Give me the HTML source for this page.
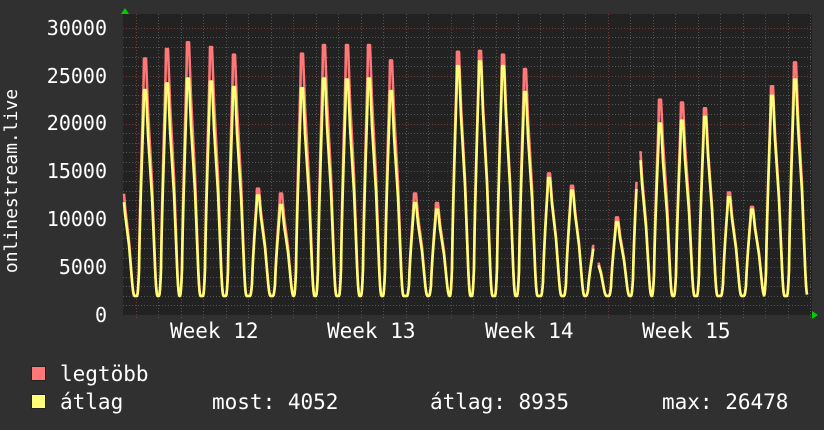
<!DOCTYPE html>
<html><head><meta charset="utf-8"><style>
html,body{margin:0;padding:0;background:#303030;}
body{width:824px;height:430px;overflow:hidden;position:relative;font-family:"DejaVu Sans Mono","Liberation Mono",monospace;color:#fff;}
.t{position:absolute;white-space:pre;line-height:1;}
.yl{font-size:20px;right:717px;}
.wk{font-size:21px;}
.lg{font-size:21px;}
.sq{position:absolute;width:13px;height:13px;border:1px solid #222;}
</style></head><body>
<svg id="g" width="824" height="430" style="position:absolute;left:0;top:0">
<rect x="123" y="14" width="689" height="301" fill="#222"/>
<g id="grid"></g>
<g id="lines"></g>
<polygon points="121,14 125,8 129,14" fill="#0c0"/>
<polygon points="812,311 818,315 812,319" fill="#0c0"/>
</svg>
<div class="t yl" style="top:18px">30000</div>
<div class="t yl" style="top:66px">25000</div>
<div class="t yl" style="top:113px">20000</div>
<div class="t yl" style="top:161px">15000</div>
<div class="t yl" style="top:209px">10000</div>
<div class="t yl" style="top:257px">5000</div>
<div class="t yl" style="top:305px">0</div>
<div class="t" style="font-size:18px;left:12px;top:181px;transform:translate(-50%,-50%) rotate(-90deg);transform-origin:center;">onlinestream.live</div>
<div class="t wk" style="left:170px;top:321px">Week 12</div>
<div class="t wk" style="left:327px;top:321px">Week 13</div>
<div class="t wk" style="left:485px;top:321px">Week 14</div>
<div class="t wk" style="left:642px;top:321px">Week 15</div>
<div class="sq" style="left:31px;top:366px;background:#f77;"></div>
<div class="sq" style="left:31px;top:394px;background:#ff7;"></div>
<div class="t lg" style="left:60px;top:364px">legtöbb</div>
<div class="t lg" style="left:60px;top:392px">átlag</div>
<div class="t lg" style="left:212px;top:392px">most: 4052</div>
<div class="t lg" style="left:430px;top:392px">átlag: 8935</div>
<div class="t lg" style="left:662px;top:392px">max: 26478</div>
<script>
var NS="http://www.w3.org/2000/svg";
var grid=document.getElementById('grid'),lines=document.getElementById('lines');
function ln(x1,y1,x2,y2,c){var l=document.createElementNS(NS,'line');l.setAttribute('x1',x1);l.setAttribute('y1',y1);l.setAttribute('x2',x2);l.setAttribute('y2',y2);l.setAttribute('stroke',c);l.setAttribute('stroke-width',1);l.setAttribute('stroke-dasharray','1,2');grid.appendChild(l);}
var Y=function(v){return 315-v*0.00957;};
for(var v=1000;v<=30000;v+=1000){var y=Math.round(Y(v))+.5;ln(123,y,812,y,v%5000?'#555':'#7a3a3a');}
for(var i=0;i<31;i++){var x=Math.round(136+22.47*i)+0.5;if(x>812)break;ln(x,14,x,318,i%7?'#555':'#7a3a3a');}
var pk=[[100,12000,11500],[122,14000,13000],[145,26800,23500],[167,27800,24200],[188,28500,24700],[211,28000,24400],[234,27200,23800],[258,13200,12500],[281,12700,11500],[302,27300,23700],[324,28200,24700],[347,28200,24600],[369,28200,24700],[391,26600,23400],[415,12700,11700],[437,11700,11000],[458,27500,26000],[480,27600,26500],[503,27200,26000],[525,25700,23300],[549,14800,14300],[572,13500,13000],[594,7200,6800],[617,10200,9700],[639,18000,17000],[660,22500,20000],[682,22200,20300],[705,21600,20700],[729,12800,12300],[752,11300,11000],[772,23900,22900],[795,26400,24600],[818,14000,12000]];
function lerp(a,b,t){return a+(b-a)*t;}
function shape(d){
 if(d<-8||d>12.5)return 0;
 if(d<-6)return lerp(0,0.12,Math.pow((d+8)/2,2));
 if(d<-1)return lerp(0.12,0.95,Math.pow((d+6)/5,0.8));
 if(d<=1)return 1;
 if(d<=3)return lerp(1,0.78,(d-1)/2);
 if(d<=7)return lerp(0.78,0.48,(d-3)/4);
 if(d<=10)return lerp(0.48,0.14,(d-7)/3);
 return 0.14*Math.pow(1-(d-10)/2.5,2);}
function val(x,k){var m=0;for(var i=0;i<pk.length;i++){var s=shape(x-pk[i][0])*(pk[i][k]-2000);if(s>m)m=s;}return 2000+m;}
function gap(x){return (x>=595&&x<=598)||(x>=637&&x<=640);}
function draw(k,c){var d='',pen=false;for(var x=124;x<=807;x+=0.5){if(gap(x)){pen=false;continue;}var v=val(x,k);d+=(pen?'L':'M')+x+','+Y(v).toFixed(1);pen=true;}var p=document.createElementNS(NS,'path');p.setAttribute('d',d);p.setAttribute('fill','none');p.setAttribute('stroke',c);p.setAttribute('stroke-width',2.6);p.setAttribute('stroke-linejoin','round');lines.appendChild(p);}
draw(1,'#f77');draw(2,'#ff7');
</script>
</body></html>
